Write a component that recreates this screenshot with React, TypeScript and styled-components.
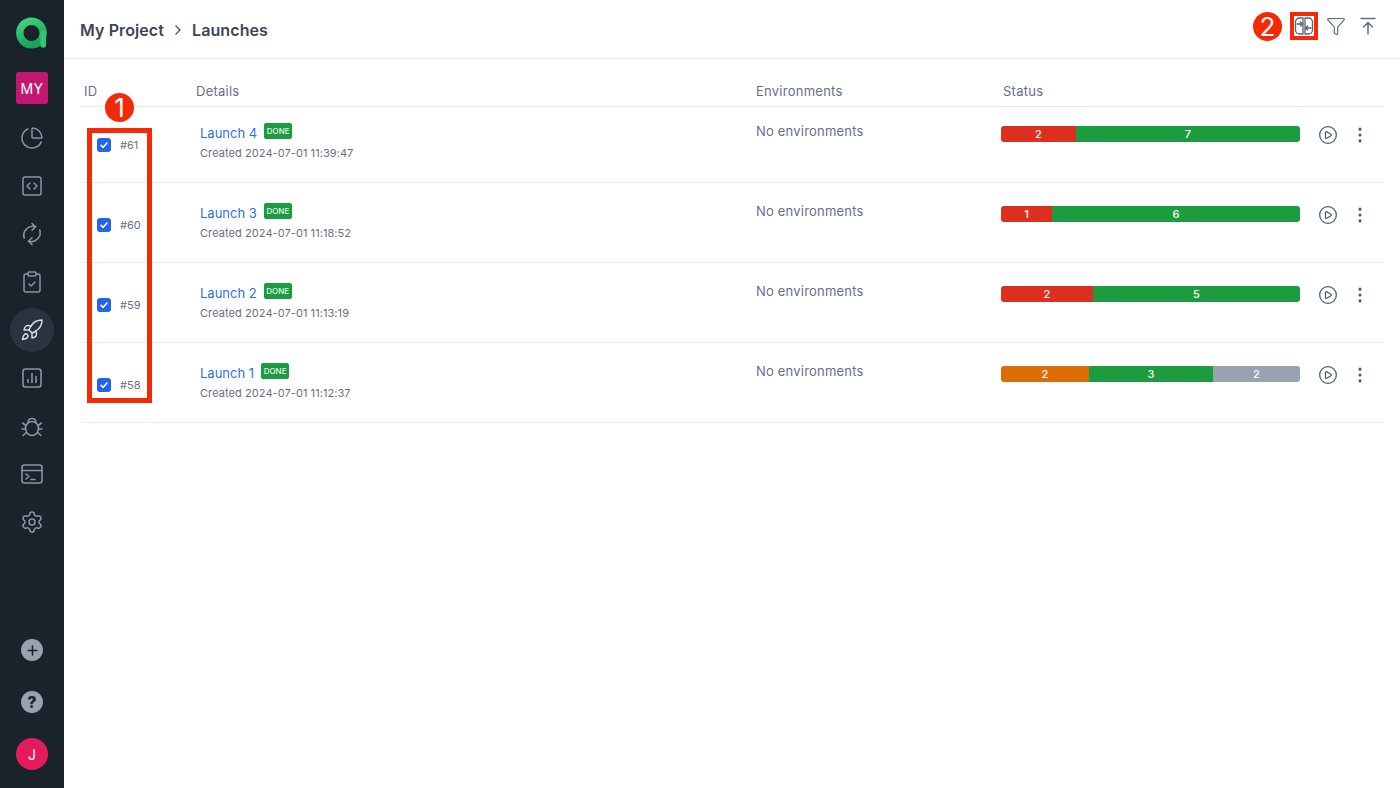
import React from "react";
import styled, { createGlobalStyle } from "styled-components";
import {
  ChartPie,
  CirclePlay,
  ClipboardCheck,
  EllipsisVertical,
  Funnel,
  Plus,
  Rocket,
  Settings,
  SquareCode,
} from "lucide-react";

const GlobalStyle = createGlobalStyle`
  html, body {
    margin: 0;
    padding: 0;
    background: #fff;
    font-family: Inter, "Noto Sans", sans-serif;
  }
`;

const Page = styled.div`
  position: relative;
  display: flex;
  width: 1400px;
  height: 788px;
  overflow: hidden;
`;

const Sidebar = styled.aside`
  display: flex;
  flex-direction: column;
  align-items: center;
  flex: 0 0 64px;
  background: #1a222c;
  padding: 16px 0 18px;
  box-sizing: border-box;
`;

const LogoMark = styled.svg`
  display: block;
  flex: none;
`;

const ProjectBox = styled.div`
  display: flex;
  align-items: center;
  justify-content: center;
  width: 32px;
  height: 32px;
  margin: 22px 0 12px;
  border-radius: 3px;
  background: #c2186f;
  color: #fff;
  font-size: 14px;
  font-weight: 400;
  letter-spacing: 0.4px;
`;

const NavItem = styled.div<{ $active?: boolean }>`
  display: flex;
  align-items: center;
  justify-content: center;
  width: 44px;
  height: 44px;
  margin-bottom: 4px;
  border-radius: 50%;
  color: ${(p) => (p.$active ? "#d5dae2" : "#8a94a3")};
  background: ${(p) => (p.$active ? "#2b3340" : "transparent")};
`;

const SidebarBottom = styled.div`
  display: flex;
  flex-direction: column;
  align-items: center;
  margin-top: auto;
`;

const RoundAction = styled.div`
  display: flex;
  align-items: center;
  justify-content: center;
  width: 22px;
  height: 22px;
  margin-bottom: 30px;
  border-radius: 50%;
  background: #98a3b1;
  color: #1a222c;
  font-size: 16px;
  font-weight: 800;
`;

const Avatar = styled.div`
  display: flex;
  align-items: center;
  justify-content: center;
  width: 32px;
  height: 32px;
  margin-top: -5px;
  border-radius: 50%;
  background: #e31b5a;
  color: #fff;
  font-size: 14px;
  font-weight: 400;
`;

const Main = styled.main`
  flex: 1;
  min-width: 0;
`;

const Header = styled.header`
  display: flex;
  align-items: center;
  justify-content: space-between;
  height: 58px;
  padding: 0 16px;
  border-bottom: 1px solid #e8edf2;
`;

const Crumbs = styled.div`
  display: flex;
  align-items: center;
  gap: 8px;
  padding-top: 2px;
  color: #3d4657;
  font-size: 16px;
  font-weight: 600;
  letter-spacing: 0.1px;
`;

const Tools = styled.div`
  display: flex;
  align-items: center;
  gap: 12px;
  margin: -6px 6px 0 0;
  color: #667085;
`;

const Table = styled.section`
  margin: 0 16px;
`;

const HeadRow = styled.div`
  display: grid;
  grid-template-columns: 116px 560px 247px 1fr;
  align-items: center;
  height: 48px;
  padding-top: 16px;
  box-sizing: border-box;
  border-bottom: 1px solid #e8edf2;
  color: #667085;
  font-size: 13px;
  letter-spacing: 0.25px;
`;

const HeadCell = styled.div<{ $inset?: number }>`
  padding-left: ${(p) => p.$inset ?? 0}px;
`;

const Row = styled.div`
  display: grid;
  grid-template-columns: 116px 560px 245px 1fr;
  align-items: start;
  height: 80px;
  padding-top: 20px;
  box-sizing: border-box;
  border-bottom: 1px solid #e8edf2;

  ${HeadRow} + & {
    height: 76px;
    padding-top: 16px;
  }
`;

const IdCell = styled.div`
  display: flex;
  align-items: center;
  gap: 9px;
  padding: 15px 0 0 17px;
  color: #667085;
  font-size: 11px;
`;

const Check = styled.span`
  display: flex;
  align-items: center;
  justify-content: center;
  width: 14px;
  height: 14px;
  border-radius: 3px;
  background: #2563eb;
`;

const Details = styled.div`
  padding-left: 4px;
`;

const TitleLine = styled.div`
  display: flex;
  align-items: flex-start;
  gap: 7px;
  height: 22px;
`;

const LaunchName = styled.a`
  margin-top: 1px;
  color: #2f6fdf;
  font-size: 13px;
  line-height: 18px;
`;

const DoneBadge = styled.span`
  display: flex;
  align-items: center;
  justify-content: center;
  width: 28px;
  height: 16px;
  border-radius: 2px;
  background: #1c9c3f;
  color: #e4f6e9;
  font-size: 8px;
  font-weight: 500;
`;

const Created = styled.div`
  color: #667085;
  font-size: 11px;
  line-height: 16px;
  letter-spacing: 0.07px;
`;

const EnvCell = styled.div`
  color: #667085;
  font-size: 13px;
  line-height: 16px;
  letter-spacing: 0.2px;
`;

const StatusCell = styled.div`
  display: flex;
  align-items: center;
`;

const Bar = styled.div`
  display: flex;
  width: 299px;
  height: 16px;
  overflow: hidden;
  border-radius: 3px;
`;

const Segment = styled.div<{ $color: string; $width: number }>`
  display: flex;
  align-items: center;
  justify-content: center;
  width: ${(p) => p.$width}px;
  background: ${(p) => p.$color};
  color: #fff;
  font-size: 11px;
  font-weight: 500;
`;

const RowAction = styled.span`
  display: flex;
  color: #4f5a6d;
  margin-left: 18px;
  padding-top: 2px;

  & + & {
    margin-left: 12px;
  }
`;

const Marker = styled.div<{ $x: number; $y: number }>`
  position: absolute;
  left: ${(p) => p.$x}px;
  top: ${(p) => p.$y}px;
  display: flex;
  align-items: center;
  justify-content: center;
  width: 29px;
  height: 29px;
  border-radius: 50%;
  background: #f42a06;
  color: #fff;
  font-size: 26px;
  font-weight: 400;
`;

const Highlight = styled.div<{ $x: number; $y: number; $w: number; $h: number; $border: number }>`
  position: absolute;
  left: ${(p) => p.$x}px;
  top: ${(p) => p.$y}px;
  width: ${(p) => p.$w}px;
  height: ${(p) => p.$h}px;
  box-sizing: border-box;
  border: ${(p) => p.$border}px solid #f42a06;
`;

const Logo = () => (
  <LogoMark width="34" height="34" viewBox="0 0 34 34">
    <defs>
      <linearGradient id="logoRing" x1="0" y1="0" x2="0.4" y2="1">
        <stop offset="0" stopColor="#3fd27f" />
        <stop offset="1" stopColor="#1aa658" />
      </linearGradient>
    </defs>
    <circle cx="16.500" cy="17" r="11.700" fill="none" stroke="url(#logoRing)" strokeWidth="7.400" />
    <path d="M28.200 17v12" stroke="#32c572" strokeWidth="5.600" strokeLinecap="round" />
  </LogoMark>
);

const LoopIcon = () => (
  <svg width="24" height="24" viewBox="0 0 24 24" fill="none" stroke="currentColor" strokeWidth="1.6" strokeLinecap="round" strokeLinejoin="round">
    <path d="M4.200 16A9 9 0 0 1 15.500 4.800" />
    <path d="M12 1.500 15.500 4.800 12 8.200" />
    <path d="M19.800 8A9 9 0 0 1 8.500 19.200" />
    <path d="M12 22.500 8.500 19.200 12 15.800" />
  </svg>
);

const ChartBoxIcon = () => (
  <svg width="24" height="24" viewBox="0 0 24 24" fill="none" stroke="currentColor" strokeWidth="1.6" strokeLinecap="round">
    <rect x="3" y="3" width="18" height="18" rx="2.5" />
    <path d="M8 16.500v-3M12 16.500v-9M16 16.500v-6" />
  </svg>
);

const BugIcon = () => (
  <svg width="24" height="24" viewBox="0 0 24 24" fill="none" stroke="currentColor" strokeWidth="1.6" strokeLinecap="round" strokeLinejoin="round">
    <ellipse cx="12" cy="14.500" rx="6.500" ry="7" />
    <path d="M8 8.500a4 4 0 0 1 8 0" />
    <path d="M6 11.500 2.500 9M5.500 15H2M6.500 18.500 3 21.500M18 11.500 21.500 9M18.500 15H22M17.500 18.500l3.500 3" />
  </svg>
);

const TerminalBoxIcon = () => (
  <svg width="24" height="24" viewBox="0 0 24 24" fill="none" stroke="currentColor" strokeWidth="1.6" strokeLinecap="round" strokeLinejoin="round">
    <rect x="2" y="3" width="20" height="18" rx="2.5" />
    <path d="M2 8.500h20M6 12l3 2.500L6 17M11 17.500h4" />
  </svg>
);

const CompareIcon = () => (
  <svg width="20" height="20" viewBox="0 0 20 20" fill="none" stroke="#586376" strokeWidth="1.3" strokeLinecap="round" strokeLinejoin="round">
    <path d="M9 2H5.500a4 4 0 0 0-4 4v8a4 4 0 0 0 4 4H9z" />
    <path d="M11 2h3.500a4 4 0 0 1 4 4v8a4 4 0 0 1-4 4H11z" />
    <path d="M3 8h5.500M6.500 6l2 2-2 2M17 12h-5.500M13.500 10l-2 2 2 2" />
  </svg>
);

const TopIcon = () => (
  <svg width="20" height="20" viewBox="0 0 20 20" fill="none" stroke="currentColor" strokeWidth="1.5" strokeLinecap="round" strokeLinejoin="round">
    <path d="M3 2.500h14M10 18V6.500M5.500 11 10 6.500l4.500 4.500" />
  </svg>
);

const CrumbArrow = () => (
  <svg width="12" height="12" viewBox="0 0 12 12" fill="none" stroke="#4a5365" strokeWidth="1.300">
    <path d="M3.500 1.500 8 6l-4.500 4.500" />
  </svg>
);

const TickIcon = () => (
  <svg width="10" height="10" viewBox="0 0 10 10" fill="none" stroke="#fff" strokeWidth="1.600" strokeLinecap="round" strokeLinejoin="round">
    <path d="M2 5.300 4.200 7.300 8 3" />
  </svg>
);

const RED = "#dc2f20";
const GREEN = "#1c9c3f";
const ORANGE = "#dd6b06";
const GREY = "#98a3b1";

const launches = [
  {
    id: "#61",
    name: "Launch 4",
    created: "Created 2024-07-01 11:39:47",
    segments: [
      { color: RED, width: 75, label: "2" },
      { color: GREEN, width: 224, label: "7" },
    ],
  },
  {
    id: "#60",
    name: "Launch 3",
    created: "Created 2024-07-01 11:18:52",
    segments: [
      { color: RED, width: 51, label: "1" },
      { color: GREEN, width: 248, label: "6" },
    ],
  },
  {
    id: "#59",
    name: "Launch 2",
    created: "Created 2024-07-01 11:13:19",
    segments: [
      { color: RED, width: 92, label: "2" },
      { color: GREEN, width: 207, label: "5" },
    ],
  },
  {
    id: "#58",
    name: "Launch 1",
    created: "Created 2024-07-01 11:12:37",
    segments: [
      { color: ORANGE, width: 88, label: "2" },
      { color: GREEN, width: 124, label: "3" },
      { color: GREY, width: 87, label: "2" },
    ],
  },
];

export default function App() {
  return (
    <Page>
      <GlobalStyle />
      <Sidebar>
        <Logo />
        <ProjectBox>MY</ProjectBox>
        <NavItem><ChartPie size={24} strokeWidth={1.5} /></NavItem>
        <NavItem><SquareCode size={24} strokeWidth={1.5} /></NavItem>
        <NavItem><LoopIcon /></NavItem>
        <NavItem><ClipboardCheck size={24} strokeWidth={1.5} /></NavItem>
        <NavItem $active><Rocket size={24} strokeWidth={1.5} /></NavItem>
        <NavItem><ChartBoxIcon /></NavItem>
        <NavItem><BugIcon /></NavItem>
        <NavItem><TerminalBoxIcon /></NavItem>
        <NavItem><Settings size={24} strokeWidth={1.5} /></NavItem>
        <SidebarBottom>
          <RoundAction><Plus size={15} strokeWidth={2.5} /></RoundAction>
          <RoundAction>?</RoundAction>
          <Avatar>J</Avatar>
        </SidebarBottom>
      </Sidebar>
      <Main>
        <Header>
          <Crumbs>
            My Project <CrumbArrow /> Launches
          </Crumbs>
          <Tools>
            <CompareIcon />
            <Funnel size={20} strokeWidth={1.5} />
            <TopIcon />
          </Tools>
        </Header>
        <Table>
          <HeadRow>
            <HeadCell $inset={4}>ID</HeadCell>
            <HeadCell>Details</HeadCell>
            <HeadCell>Environments</HeadCell>
            <HeadCell>Status</HeadCell>
          </HeadRow>
          {launches.map((launch) => (
            <Row key={launch.id}>
              <IdCell>
                <Check><TickIcon /></Check>
                {launch.id}
              </IdCell>
              <Details>
                <TitleLine>
                  <LaunchName>{launch.name}</LaunchName>
                  <DoneBadge>DONE</DoneBadge>
                </TitleLine>
                <Created>{launch.created}</Created>
              </Details>
              <EnvCell>No environments</EnvCell>
              <StatusCell>
                <Bar>
                  {launch.segments.map((segment, i) => (
                    <Segment key={i} $color={segment.color} $width={segment.width}>
                      {segment.label}
                    </Segment>
                  ))}
                </Bar>
                <RowAction><CirclePlay size={20} strokeWidth={1.5} /></RowAction>
                <RowAction><EllipsisVertical size={20} strokeWidth={1.75} /></RowAction>
              </StatusCell>
            </Row>
          ))}
        </Table>
      </Main>
      <Highlight $x={87} $y={128} $w={65} $h={275} $border={5} />
      <Highlight $x={1290} $y={12} $w={28} $h={28} $border={4} />
      <Marker $x={105} $y={93}>1</Marker>
      <Marker $x={1253} $y={12}>2</Marker>
    </Page>
  );
}
